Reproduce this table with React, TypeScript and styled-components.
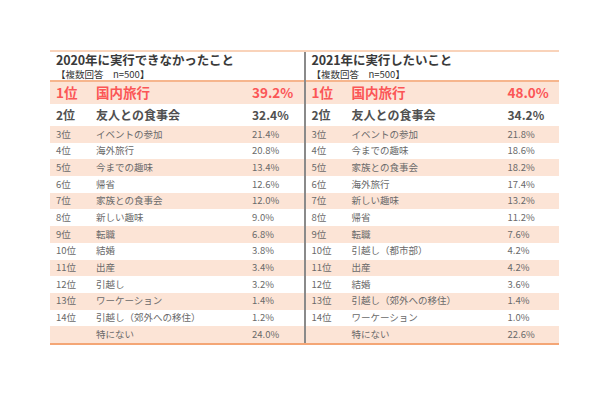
import React from "react";
import styled, { createGlobalStyle } from "styled-components";

const Global = createGlobalStyle`
  html, body { margin: 0; padding: 0; background: #ffffff; }
  body { font-family: "Noto Sans CJK JP", "Noto Sans", sans-serif; }
`;

type Item = { rank: string; name: string; pct: string };

const left: Item[] = [
  { rank: "1位", name: "国内旅行", pct: "39.2%" },
  { rank: "2位", name: "友人との食事会", pct: "32.4%" },
  { rank: "3位", name: "イベントの参加", pct: "21.4%" },
  { rank: "4位", name: "海外旅行", pct: "20.8%" },
  { rank: "5位", name: "今までの趣味", pct: "13.4%" },
  { rank: "6位", name: "帰省", pct: "12.6%" },
  { rank: "7位", name: "家族との食事会", pct: "12.0%" },
  { rank: "8位", name: "新しい趣味", pct: "9.0%" },
  { rank: "9位", name: "転職", pct: "6.8%" },
  { rank: "10位", name: "結婚", pct: "3.8%" },
  { rank: "11位", name: "出産", pct: "3.4%" },
  { rank: "12位", name: "引越し", pct: "3.2%" },
  { rank: "13位", name: "ワーケーション", pct: "1.4%" },
  { rank: "14位", name: "引越し（郊外への移住）", pct: "1.2%" },
  { rank: "", name: "特にない", pct: "24.0%" },
];

const right: Item[] = [
  { rank: "1位", name: "国内旅行", pct: "48.0%" },
  { rank: "2位", name: "友人との食事会", pct: "34.2%" },
  { rank: "3位", name: "イベントの参加", pct: "21.8%" },
  { rank: "4位", name: "今までの趣味", pct: "18.6%" },
  { rank: "5位", name: "家族との食事会", pct: "18.2%" },
  { rank: "6位", name: "海外旅行", pct: "17.4%" },
  { rank: "7位", name: "新しい趣味", pct: "13.2%" },
  { rank: "8位", name: "帰省", pct: "11.2%" },
  { rank: "9位", name: "転職", pct: "7.6%" },
  { rank: "10位", name: "引越し（都市部）", pct: "4.2%" },
  { rank: "11位", name: "出産", pct: "4.2%" },
  { rank: "12位", name: "結婚", pct: "3.6%" },
  { rank: "13位", name: "引越し（郊外への移住）", pct: "1.4%" },
  { rank: "14位", name: "ワーケーション", pct: "1.0%" },
  { rank: "", name: "特にない", pct: "22.6%" },
];

const Page = styled.div`
  padding: 50px 0 0 50px;
`;

const Table = styled.div`
  display: flex;
  width: 509px;
  border-top: 2px solid #f9d3ba;
  border-bottom: 2px solid #f4a676;
`;

const Panel = styled.section<{ $divider?: boolean }>`
  flex: 1;
  display: flex;
  flex-direction: column;
  border-left: ${(p) => (p.$divider ? "2px solid #8a8a8a" : "none")};
`;

const Header = styled.div`
  height: 30px;
  padding: 0 0 0 6px;
  box-sizing: border-box;
  border-bottom: 2px solid #f6b58d;
  display: flex;
  flex-direction: column;
`;

const Title = styled.div`
  font-size: 12.5px;
  font-weight: 700;
  line-height: 16px;
  color: #3a3a3a;
  letter-spacing: -0.1px;
`;

const Sub = styled.div`
  font-size: 9.5px;
  line-height: 12px;
  color: #333;
  white-space: pre;
`;

type Level = "top" | "second" | "normal";

const sizes: Record<Level, string> = { top: "13.5px", second: "12px", normal: "9.5px" };
const colors: Record<Level, string> = { top: "#fb5656", second: "#505050", normal: "#6a6a6a" };

const Row = styled.div<{ $level: Level; $shaded: boolean }>`
  display: grid;
  grid-template-columns: 40px 156px 1fr;
  align-items: center;
  padding-left: 6px;
  height: ${(p) => (p.$level === "normal" ? "16.7px" : "22px")};
  background: ${(p) => (p.$shaded ? "#fce4d6" : "#ffffff")};
  font-size: ${(p) => sizes[p.$level]};
  font-weight: ${(p) => (p.$level === "normal" ? 400 : 700)};
  color: ${(p) => colors[p.$level]};
  line-height: 1;
  white-space: nowrap;
`;

const Cell = styled.span``;

function Column({
  title,
  items,
  divider,
}: {
  title: string;
  items: Item[];
  divider?: boolean;
}) {
  return (
    <Panel $divider={divider}>
      <Header>
        <Title>{title}</Title>
        <Sub>{"【複数回答　n=500】"}</Sub>
      </Header>
      {items.map((it, i) => (
        <Row
          key={i}
          $level={i === 0 ? "top" : i === 1 ? "second" : "normal"}
          $shaded={i % 2 === 0}
        >
          <Cell>{it.rank}</Cell>
          <Cell>{it.name}</Cell>
          <Cell>{it.pct}</Cell>
        </Row>
      ))}
    </Panel>
  );
}

export default function App() {
  return (
    <Page>
      <Global />
      <Table>
        <Column title="2020年に実行できなかったこと" items={left} />
        <Column title="2021年に実行したいこと" items={right} divider />
      </Table>
    </Page>
  );
}
